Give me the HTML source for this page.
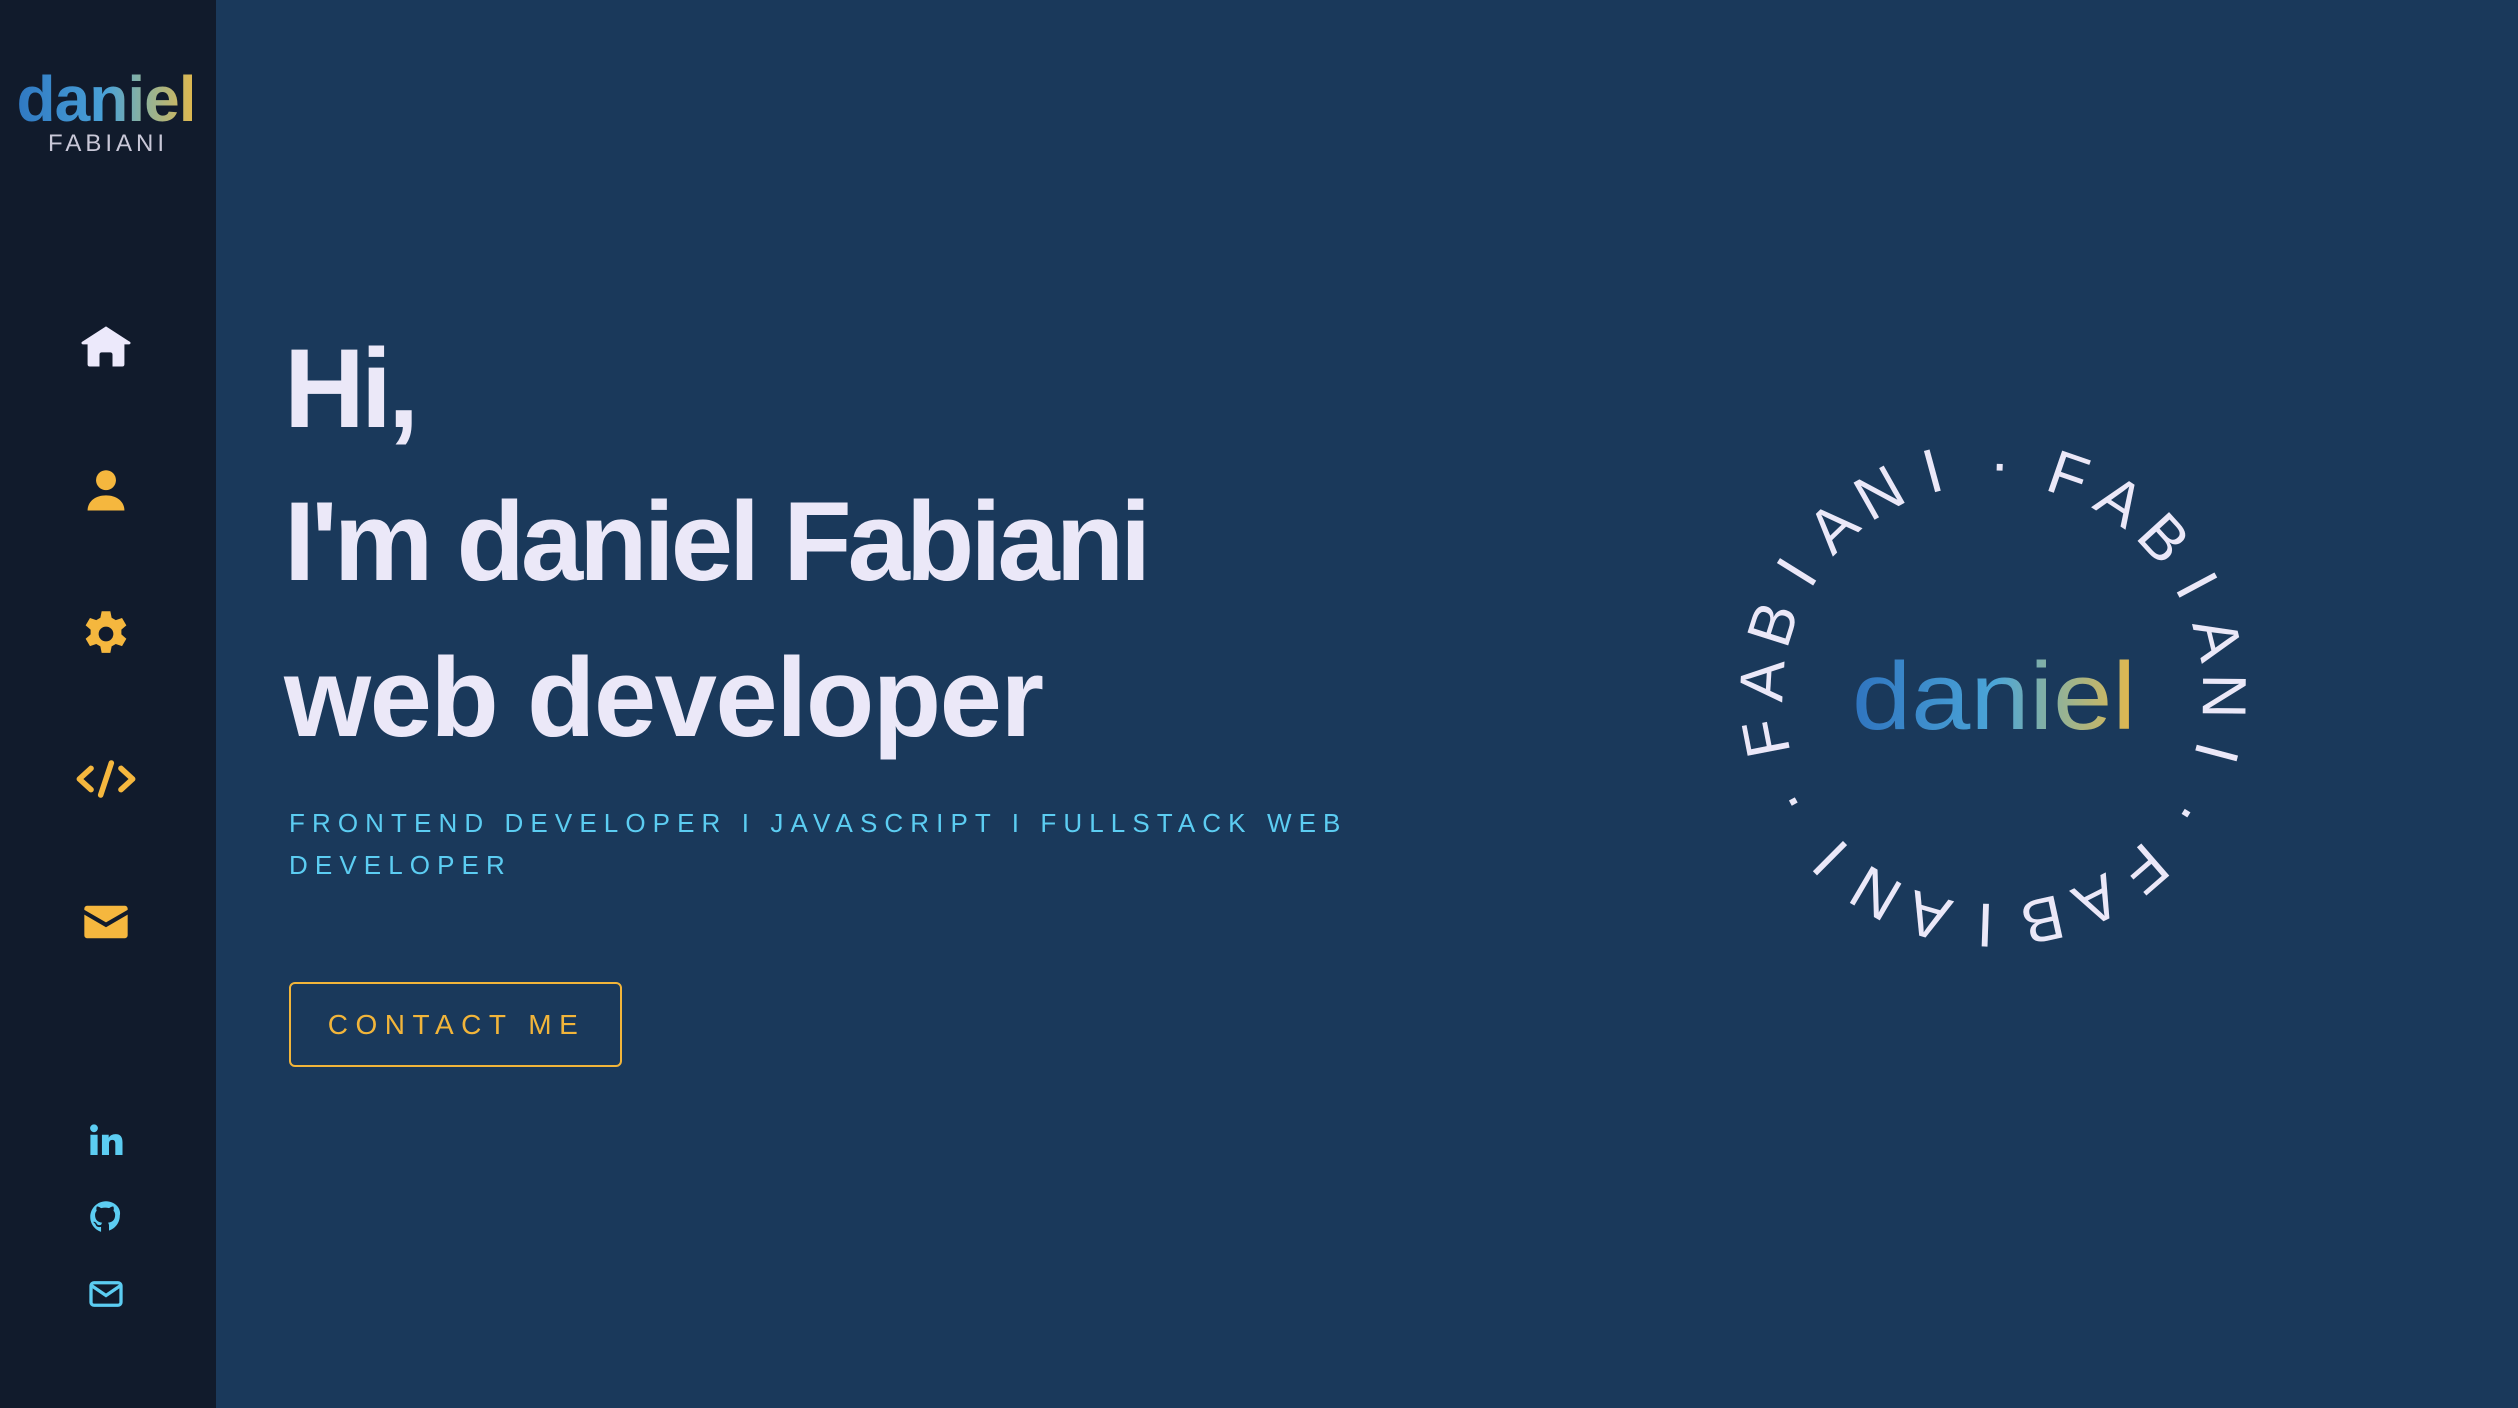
<!DOCTYPE html>
<html><head><meta charset="utf-8"><style>
*{margin:0;padding:0;box-sizing:border-box}
html,body{width:2518px;height:1408px;overflow:hidden;background:#1a395b;font-family:"Liberation Sans",sans-serif}
.side{position:absolute;left:0;top:0;width:216px;height:1408px;background:#111b2c}
.logo{position:absolute;left:0;width:216px;text-align:center}
.grad{background:linear-gradient(90deg,#2f78c2 0%,#4aa2d8 50%,#8fb29a 72%,#e2b84c 100%);-webkit-background-clip:text;background-clip:text;color:transparent}
.ic{position:absolute;left:80px;width:52px;height:52px}
.so{position:absolute;left:88px;width:36px;height:36px}
.h{position:absolute;left:284px;font-weight:bold;font-size:112px;color:#ebe8f8;letter-spacing:-4px;white-space:nowrap;line-height:1}
.sub{position:absolute;left:289px;font-size:26px;color:#5ccdf2;letter-spacing:7.1px;white-space:nowrap;line-height:1}
.btn{position:absolute;left:289px;top:982px;width:333px;height:85px;border:2px solid #f2b53a;border-radius:6px;color:#f2b53a;font-size:28px;letter-spacing:7.5px;text-align:center;line-height:81px;padding-left:2px}
</style></head><body>
<div class="side">
  <div class="logo" style="top:62px;padding-right:4px"><span class="grad" style="font-size:64px;font-weight:bold;letter-spacing:-1px">daniel</span></div>
  <div class="logo" style="top:130px;color:#c9c8d8;font-size:24px;letter-spacing:4px">FABIANI</div>

  <svg class="ic" style="top:321px" viewBox="0 0 24 24"><path fill="#ece9fb" d="M12 2.5 1 9.6c-.6.4-.3 1.2.4 1.2H3.5V20c0 .6.4 1 1 1H9v-5.5c0-.6.4-1 1-1h4c.6 0 1 .4 1 1V21h4.5c.6 0 1-.4 1-1v-9.2h2.1c.7 0 1-.8.4-1.2Z"/></svg>
  <svg class="ic" style="top:465px" viewBox="0 0 24 24"><circle cx="12" cy="7" r="4.6" fill="#f5b73e"/><path fill="#f5b73e" d="M3.5 21c0-4.2 3.6-7 8.5-7s8.5 2.8 8.5 7Z"/></svg>
  <svg class="ic" style="top:608px" viewBox="0 0 24 24"><path fill="#f5b73e" fill-rule="evenodd" d="M10 1.5h4l.6 3 1.9 1.1 2.9-1 2 3.4-2.3 2v2.2l2.3 2-2 3.4-2.9-1-1.9 1.1-.6 3h-4l-.6-3-1.9-1.1-2.9 1-2-3.4 2.3-2v-2.2l-2.3-2 2-3.4 2.9 1 1.9-1.1ZM12 8.6a3.4 3.4 0 1 0 0 6.8 3.4 3.4 0 0 0 0-6.8Z"/></svg>
  <svg class="ic" style="top:753px;left:74px;width:64px" viewBox="0 0 30 24"><path fill="none" stroke="#f5b73e" stroke-width="2.6" stroke-linecap="round" stroke-linejoin="round" d="M8 7 2.5 12 8 17M22 7l5.5 5L22 17M17.5 4.5l-5 15"/></svg>
  <svg class="ic" style="top:896px" viewBox="0 0 24 24"><path fill="#f5b73e" d="M3.5 4.5h17c1 0 1.5.6 1.5 1.5v.4L12 12.2 2 6.4V6c0-.9.5-1.5 1.5-1.5ZM2 8.6l10 5.8 10-5.8V18c0 1-.6 1.5-1.5 1.5h-17C2.5 19.5 2 19 2 18Z"/></svg>

  <svg class="so" style="top:1122px" viewBox="0 0 24 24"><circle cx="4" cy="4.2" r="2.6" fill="#5ccdf2"/><rect x="1.6" y="8.5" width="4.8" height="13.5" fill="#5ccdf2"/><path fill="#5ccdf2" d="M9.3 8.5h4.5v2c.8-1.4 2.4-2.4 4.6-2.4 3.3 0 4.6 2 4.6 5.6V22h-4.8v-7.4c0-1.8-.5-2.7-2-2.7s-2.2 1-2.2 2.7V22H9.3Z"/></svg>
  <svg class="so" style="top:1199px" viewBox="0 0 24 24"><path fill="#5ccdf2" d="M12 1.5C6.2 1.5 1.5 6.2 1.5 12c0 4.6 3 8.5 7.2 9.9V18.6c-2.9.6-3.5-1.3-3.5-1.3-.5-1.2-1.2-1.5-1.2-1.5-1-.7.1-.6.1-.6 1 .1 1.6 1.1 1.6 1.1.9 1.6 2.5 1.1 3.1.9.1-.7.4-1.1.7-1.4-2.3-.3-4.8-1.2-4.8-5.2 0-1.1.4-2.1 1.1-2.8-.1-.3-.5-1.3.1-2.8 0 0 .9-.3 2.9 1.1a10 10 0 0 1 5.2 0c2-1.4 2.9-1.1 2.9-1.1.6 1.5.2 2.5.1 2.8.7.7 1.1 1.7 1.1 2.8 0 4-2.5 4.9-4.8 5.2.4.3.7 1 .7 2v3.3c4.2-1.4 7.2-5.3 7.2-9.9C22.5 6.2 17.8 1.5 12 1.5Z"/></svg>
  <svg class="so" style="top:1276px" viewBox="0 0 24 24"><rect x="2" y="4.5" width="20" height="15" rx="2" fill="none" stroke="#5ccdf2" stroke-width="2.2"/><path d="M2.5 6.5 12 13l9.5-6.5" fill="none" stroke="#5ccdf2" stroke-width="2.2"/></svg>
</div>

<div class="h" style="top:333px">Hi,</div>
<div class="h" style="top:486px">I'm daniel Fabiani</div>
<div class="h" style="top:642px;letter-spacing:-1.5px">web developer</div>

<div class="sub" style="top:810px">FRONTEND DEVELOPER I JAVASCRIPT I FULLSTACK WEB</div>
<div class="sub" style="top:852px">DEVELOPER</div>

<div class="btn">CONTACT ME</div>

<svg style="position:absolute;left:0;top:0" width="2518" height="1408">
  <defs>
    <linearGradient id="g" x1="0" x2="1" y1="0" y2="0">
      <stop offset="0" stop-color="#2f74bf"/><stop offset="0.5" stop-color="#4ba5d8"/><stop offset="0.72" stop-color="#8fb29a"/><stop offset="1" stop-color="#e6b84a"/>
    </linearGradient>
  </defs>
  <g font-family="Liberation Sans, sans-serif" font-size="62" fill="#ebe8f8" text-anchor="middle">
    <text x="1993" y="484" transform="rotate(1.7 1993 694)">·</text>
    <text x="1993" y="484" transform="rotate(19 1993 694)">F</text>
    <text x="1993" y="484" transform="rotate(33.3 1993 694)">A</text>
    <text x="1993" y="484" transform="rotate(47.6 1993 694)">B</text>
    <text x="1993" y="484" transform="rotate(61.9 1993 694)">I</text>
    <text x="1993" y="484" transform="rotate(76.2 1993 694)">A</text>
    <text x="1993" y="484" transform="rotate(90.5 1993 694)">N</text>
    <text x="1993" y="484" transform="rotate(104.8 1993 694)">I</text>
    <text x="1993" y="484" transform="rotate(121.7 1993 694)">·</text>
    <text x="1993" y="484" transform="rotate(139 1993 694)">F</text>
    <text x="1993" y="484" transform="rotate(153.3 1993 694)">A</text>
    <text x="1993" y="484" transform="rotate(167.6 1993 694)">B</text>
    <text x="1993" y="484" transform="rotate(181.9 1993 694)">I</text>
    <text x="1993" y="484" transform="rotate(196.2 1993 694)">A</text>
    <text x="1993" y="484" transform="rotate(210.5 1993 694)">N</text>
    <text x="1993" y="484" transform="rotate(224.8 1993 694)">I</text>
    <text x="1993" y="484" transform="rotate(241.7 1993 694)">·</text>
    <text x="1993" y="484" transform="rotate(259 1993 694)">F</text>
    <text x="1993" y="484" transform="rotate(273.3 1993 694)">A</text>
    <text x="1993" y="484" transform="rotate(287.6 1993 694)">B</text>
    <text x="1993" y="484" transform="rotate(301.9 1993 694)">I</text>
    <text x="1993" y="484" transform="rotate(316.2 1993 694)">A</text>
    <text x="1993" y="484" transform="rotate(330.5 1993 694)">N</text>
    <text x="1993" y="484" transform="rotate(344.8 1993 694)">I</text>
  </g>
  <text x="1852" y="729" font-family="Liberation Sans, sans-serif" font-size="96" fill="url(#g)" textLength="284" lengthAdjust="spacingAndGlyphs">daniel</text>
</svg>
</body></html>
